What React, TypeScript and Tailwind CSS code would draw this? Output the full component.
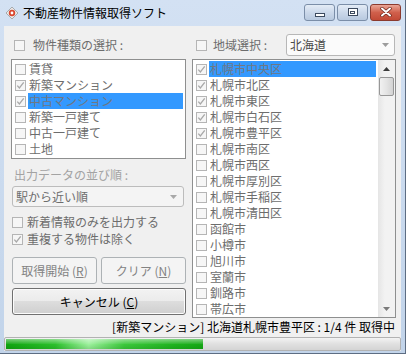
import React from "react"

const kinds = [
  { label: "賃貸", checked: false },
  { label: "新築マンション", checked: true },
  { label: "中古マンション", checked: true, selected: true },
  { label: "新築一戸建て", checked: false },
  { label: "中古一戸建て", checked: false },
  { label: "土地", checked: false },
]

const areas = [
  { label: "札幌市中央区", checked: true, selected: true },
  { label: "札幌市北区", checked: true },
  { label: "札幌市東区", checked: true },
  { label: "札幌市白石区", checked: true },
  { label: "札幌市豊平区", checked: true },
  { label: "札幌市南区", checked: false },
  { label: "札幌市西区", checked: false },
  { label: "札幌市厚別区", checked: false },
  { label: "札幌市手稲区", checked: false },
  { label: "札幌市清田区", checked: false },
  { label: "函館市", checked: false },
  { label: "小樽市", checked: false },
  { label: "旭川市", checked: false },
  { label: "室蘭市", checked: false },
  { label: "釧路市", checked: false },
  { label: "帯広市", checked: false },
]

const Check = ({ checked }: { checked?: boolean }) => (
  <span className="flex h-[11px] w-[11px] shrink-0 items-center justify-center border border-[#b5b5b5] bg-[#f6f6f6]">
    {checked && (
      <svg width="9" height="9" viewBox="0 0 9 9">
        <path d="M1.3 4.6 L3.4 7 L7.7 1.4" fill="none" stroke="#a8a8a8" strokeWidth="1.3" />
      </svg>
    )}
  </span>
)

const Arrow = ({ up, color = "#9a9a9a" }: { up?: boolean; color?: string }) => (
  <svg width="7" height="4" viewBox="0 0 7 4">
    <path d={up ? "M0 4 L3.5 0 L7 4 Z" : "M0 0 L7 0 L3.5 4 Z"} fill={color} />
  </svg>
)

const Row = ({ label, checked, selected }: { label: string; checked?: boolean; selected?: boolean }) => (
  <div className="flex h-[16px] items-center pl-[3px] pr-[2px]">
    <Check checked={checked} />
    <span
      className={
        "ml-[2px] flex h-[16px] flex-1 items-center pl-px text-[12px] leading-[16px] " +
        (selected ? "bg-[#3399ff] text-[#6f7784]" : "text-[#6d6d6d]")
      }
    >
      {label}
    </span>
  </div>
)

const TitleButton = ({ kind }: { kind: "min" | "max" | "close" }) => {
  if (kind === "close") {
    return (
      <div className="flex h-[17px] w-[31px] items-center justify-center rounded-[3px] border border-[#8b3a2e] bg-gradient-to-b from-[#e9a596] via-[#d0604c] to-[#c24a36]">
        <svg width="12" height="10" viewBox="0 0 12 10">
          <path d="M2 1.5 L10 8.5 M10 1.5 L2 8.5" stroke="#6b2418" strokeWidth="3.4" strokeLinecap="round" />
          <path d="M2 1.5 L10 8.5 M10 1.5 L2 8.5" stroke="#ffffff" strokeWidth="2" strokeLinecap="round" />
        </svg>
      </div>
    )
  }
  return (
    <div className="flex h-[17px] w-[31px] items-center justify-center rounded-[3px] border border-[#7b8ea8] bg-gradient-to-b from-[#e4ecf6] via-[#cbd8ea] to-[#b8c9df]">
      {kind === "min" ? (
        <span className="mt-[5px] block h-[4px] w-[10px] border border-[#3c4a5e] bg-white" />
      ) : (
        <span className="flex h-[8px] w-[10px] items-center justify-center border border-[#3c4a5e] bg-white">
          <span className="block h-[3px] w-[5px] border border-[#3c4a5e]" />
        </span>
      )}
    </div>
  )
}

export default function App() {
  return (
    <div className="flex h-[354px] w-[406px] flex-col overflow-hidden border-r border-b border-[#5d6d83] bg-gradient-to-b from-[#d3e1f3] to-[#c2d4ea] font-['Noto_Sans_CJK_JP',sans-serif] text-[12px]">
      {/* title bar */}
      <div className="flex h-[26px] shrink-0 items-center pl-[5px] pr-[4px]">
        <svg width="14" height="14" viewBox="0 0 14 14">
          <path d="M1 7 L7 1 L13 7 L7 13 Z" fill="#e8e8e8" stroke="#9a9a9a" strokeWidth="0.8" />
          <circle cx="7" cy="7" r="3.2" fill="#d9462e" />
          <circle cx="7" cy="7" r="1.4" fill="#ffffff" />
        </svg>
        <span className="ml-[4px] text-[12px] leading-[14px] text-black">不動産物件情報取得ソフト</span>
        <div className="ml-auto flex items-center gap-[2px] pb-[2px]">
          <TitleButton kind="min" />
          <TitleButton kind="max" />
          <TitleButton kind="close" />
        </div>
      </div>

      {/* client */}
      <div className="mx-[4px] flex h-[325px] flex-col bg-[#f0f0f0]">
        <div className="flex gap-[6px] pl-[7px] pr-[5px] pt-[8px]">
          {/* left column */}
          <div className="flex w-[175px] flex-col">
            <div className="flex h-[22px] items-center pl-[3px]">
              <Check />
              <span className="ml-[8px] leading-[16px] text-[#6d6d6d]">物件種類の選択 :</span>
            </div>
            <div className="mt-[3px] h-[100px] border border-[#8e8f8f] bg-white pt-px">
              {kinds.map((k) => (
                <Row key={k.label} {...k} />
              ))}
            </div>
            <div className="mt-[8px] h-[16px] pl-[3px] leading-[16px] text-[#a3a3a3]">出力データの並び順 :</div>
            <div className="ml-px mt-[3px] flex h-[21px] w-[172px] items-center rounded-[3px] border border-[#bcbcbc] bg-[#f4f4f4] pl-[3px] pr-[6px]">
              <span className="leading-[16px] text-[#6d6d6d]">駅から近い順</span>
              <span className="ml-auto flex">
                <Arrow color="#a8a8a8" />
              </span>
            </div>
            <div className="ml-px mt-[7px] flex h-[16px] items-center">
              <Check />
              <span className="ml-[4px] leading-[16px] text-[#6d6d6d]">新着情報のみを出力する</span>
            </div>
            <div className="ml-px mt-px flex h-[16px] items-center">
              <Check checked />
              <span className="ml-[4px] leading-[16px] text-[#6d6d6d]">重複する物件は除く</span>
            </div>
            <div className="ml-px mt-[10px] flex gap-[4px]">
              <div className="flex h-[27px] w-[85px] items-center justify-center rounded-[3px] border border-[#adb2b5] bg-[#f4f4f4] text-[#838383]">
                取得開始 (<u>R</u>)
              </div>
              <div className="flex h-[27px] w-[85px] items-center justify-center rounded-[3px] border border-[#adb2b5] bg-[#f4f4f4] text-[#838383]">
                クリア (<u>N</u>)
              </div>
            </div>
            <div className="ml-px mt-[4px] flex h-[27px] w-[174px] items-center justify-center rounded-[3px] border border-[#707070] bg-[linear-gradient(#f2f2f2,#ebebeb_50%,#dddddd_50%,#cfcfcf)] text-black shadow-[inset_0_0_0_1px_#fcfcfc]">
              キャンセル (<u>C</u>)
            </div>
          </div>

          {/* right column */}
          <div className="flex w-[204px] flex-col">
            <div className="flex h-[22px] items-center pl-[4px]">
              <Check />
              <span className="ml-[6px] leading-[16px] text-[#6d6d6d]">地域選択 :</span>
              <div className="ml-auto mr-px flex h-[22px] w-[109px] items-center rounded-[3px] border border-[#b7b7b7] bg-[#fbfbfb] pl-[3px] pr-[5px]">
                <span className="leading-[16px] text-[#4a4a4a]">北海道</span>
                <span className="ml-auto flex">
                  <Arrow color="#9d9d9d" />
                </span>
              </div>
            </div>
            <div className="mt-[3px] flex h-[259px] border border-[#8e8f8f] bg-white">
              <div className="flex-1 pt-px">
                {areas.map((a) => (
                  <Row key={a.label} {...a} />
                ))}
              </div>
              <div className="flex w-[17px] flex-col bg-[linear-gradient(90deg,#e5e5e5,#f2f2f2_40%,#f2f2f2)]">
                <div className="flex h-[17px] items-center justify-center">
                  <Arrow up color="#3c3c3c" />
                </div>
                <div className="mx-px h-[19px] rounded-[2px] border border-[#979797] bg-[linear-gradient(90deg,#f1f1f1,#e4e4e4_50%,#d3d3d3)]" />
                <div className="mt-auto flex h-[17px] items-center justify-center">
                  <Arrow color="#7a7a7a" />
                </div>
              </div>
            </div>
          </div>
        </div>

        {/* status */}
        <div className="mt-px flex h-[16px] items-center justify-end pr-[6px] leading-[16px] text-black">
          [新築マンション] 北海道札幌市豊平区 : 1/4 件 取得中
        </div>

        {/* progress */}
        <div className="mt-[2px] h-[14px] rounded-[2px] border border-[#b2b2b2] bg-[linear-gradient(#f3f3f3,#e0e0e0_50%,#d4d4d4)] p-px">
          <div className="relative h-full w-[50%] overflow-hidden bg-[linear-gradient(90deg,#11a411,#2bc02b_25%,#9cf09c_42%,#3cc83c_60%,#1fb31f_85%,#16a816)]">
            <div className="absolute inset-0 bg-[linear-gradient(rgba(255,255,255,0.45),rgba(255,255,255,0.1)_45%,rgba(0,0,0,0)_55%,rgba(0,80,0,0.15))]" />
          </div>
        </div>
      </div>
    </div>
  )
}
